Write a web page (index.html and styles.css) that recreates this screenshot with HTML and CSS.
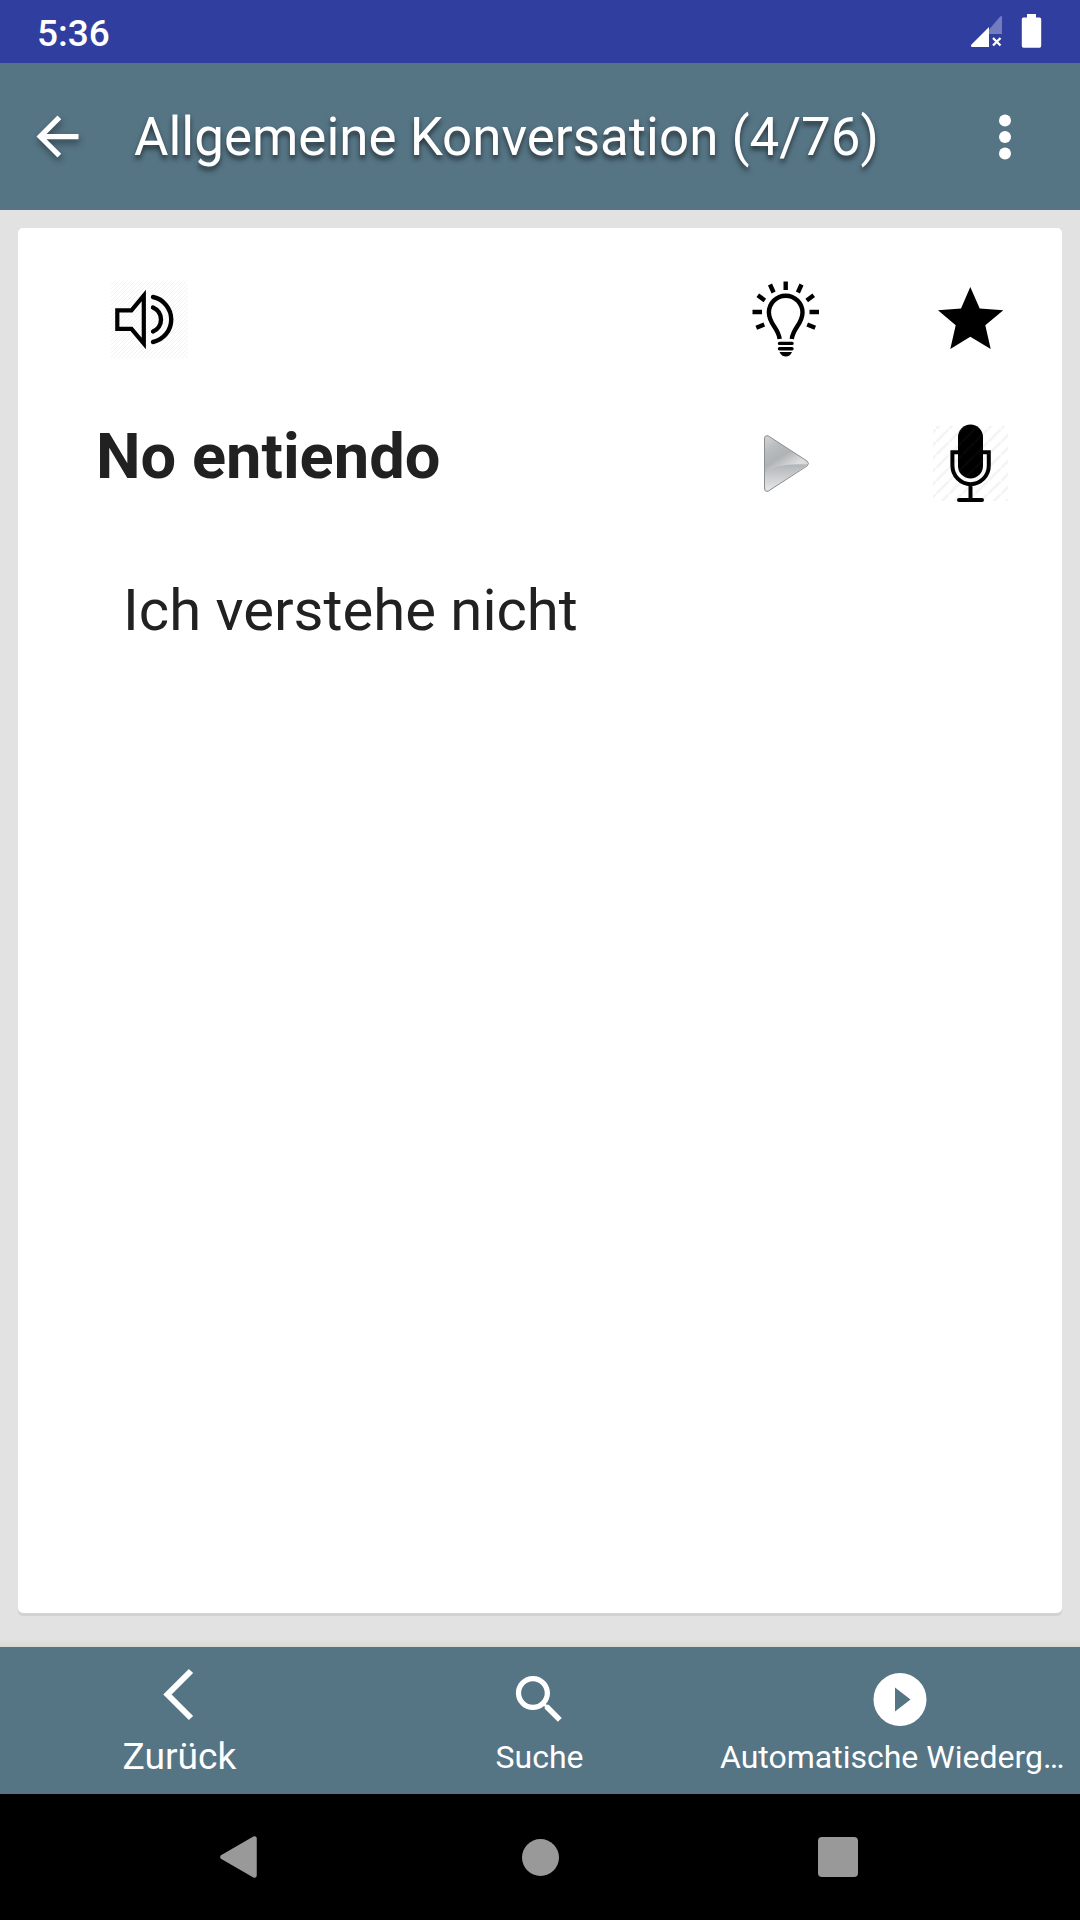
FILE: index.html
```html
<!DOCTYPE html>
<html lang="de">
<head>
    <meta charset="UTF-8">
    <meta name="viewport" content="width=device-width, initial-scale=1.0">
    <title>Allgemeine Konversation</title>
    <link rel="stylesheet" href="styles.css">
</head>
<body>
    <div class="status-bar">
        <span class="clock">5:36</span>
        <svg class="status-icons" width="72" height="36" viewBox="970 13 72 36">
            <path d="M989 29.5L1000 16.8Q1002 15 1002 17V34H989z" fill="#fff" opacity="0.32"/>
            <path d="M989 27V47H972Q970 46 971.5 44.5z" fill="#fff"/>
            <path d="M993 38l7.5 7.5M1000.5 38l-7.5 7.5" stroke="#fff" stroke-width="2.3"/>
            <path d="M1027 14h9v3.5h3.5q1.7 0 1.7 1.7V46q0 1.7-1.7 1.7h-16q-1.7 0-1.7-1.7V19.2q0-1.7 1.7-1.7h3.5z" fill="#fff"/>
        </svg>
    </div>
    <header class="toolbar">
        <svg class="back" width="63" height="63" viewBox="0 0 24 24">
            <path d="M20 11H7.83l5.59-5.59L12 4l-8 8 8 8 1.41-1.41L7.83 13H20v-2z" fill="#fff"/>
        </svg>
        <h1>Allgemeine Konversation (4/76)</h1>
        <svg class="more" width="16" height="50" viewBox="0 0 16 50">
            <circle cx="8" cy="8.5" r="6"/>
            <circle cx="8" cy="25" r="6"/>
            <circle cx="8" cy="41.5" r="6"/>
        </svg>
    </header>
    <main>
        <div class="card">
            <div class="phrase">
                <svg class="speaker" width="78" height="78" viewBox="110 281 78 78">
                    <defs>
                        <pattern id="hatch" width="4" height="4" patternUnits="userSpaceOnUse">
                            <path d="M-1 5L5 -1" stroke="#f3f3f3" stroke-width="1"/>
                        </pattern>
                    </defs>
                    <rect x="111" y="281" width="77" height="77" fill="url(#hatch)"/>
                    <g fill="none" stroke="#000" stroke-width="4.2">
                        <path d="M117.3 310.3H131.5L143.8 295.5V343.5L131.5 328.8H117.3z"/>
                        <path d="M153 307.5a13 13 0 0 1 0 24M153 297a23 23 0 0 1 0 45" stroke-width="4.4" stroke-linecap="round"/>
                    </g>
                </svg>
                <svg width="80" height="80" viewBox="746 281 80 80">
                    <g fill="none" stroke="#000" stroke-width="4.4">
                        <path d="M779.6 339C778.5 328 768.9 324 768.9 312.5a16.8 16.8 0 0 1 33.6 0C802.5 324 793 328 791.8 339"/>
                        <path d="M785.7 281.5v8.5M752.5 312h9.5M809.5 312h9.5M770 284.5l3.6 8M801.5 284.5l-3.6 8M757.8 295.2l7 5.2M813.7 295.2l-7 5.2M756.3 327.7l8-3.2M815.2 327.7l-8-3.2"/>
                        <path d="M779.5 343.4h12.5M779.5 348.8h12.5" stroke-width="3.4" stroke-linecap="round"/>
                    </g>
                    <path d="M779.5 352h12.5q-2 4.6-6.2 4.6t-6.3-4.6z"/>
                </svg>
                <svg width="80" height="80" viewBox="930 281 80 80">
                    <path d="M970.3 287L979.7 308.6L1003.3 310.3L985.3 325.3L990.7 349L970.3 336.7L950.3 349L955.7 325.3L938 310.3L961 308.6z"/>
                </svg>
                <h2>No entiendo</h2>
                <svg width="80" height="80" viewBox="746 424 80 80">
                    <defs>
                        <linearGradient id="silver" x1="0" y1="0" x2="0.5" y2="1">
                            <stop offset="0" stop-color="#d4d6d7"/>
                            <stop offset="0.25" stop-color="#b9bcbe"/>
                            <stop offset="0.45" stop-color="#b0b3b5"/>
                            <stop offset="0.7" stop-color="#dddfe0"/>
                            <stop offset="1" stop-color="#c4c6c8"/>
                        </linearGradient>
                        <linearGradient id="shine" x1="0" y1="0" x2="0" y2="1">
                            <stop offset="0" stop-color="#b2b5b7"/>
                            <stop offset="1" stop-color="#e6e7e8"/>
                        </linearGradient>
                    </defs>
                    <path d="M764.5 439q0-4.5 4-3l38.5 25q3 2.5 0 5l-38.5 25q-4 1.5-4-3z" fill="url(#silver)"/>
                    <path d="M765.5 472q13-9.5 42-7.5l-39 26q-3 1-3-2z" fill="url(#shine)"/>
                    <path d="M764.5 439q0-4.5 4-3l38.5 25q3 2.5 0 5l-38.5 25q-4 1.5-4-3z" fill="none" stroke="#8c8f91" stroke-width="1"/>
                </svg>
                <svg width="80" height="80" viewBox="930 424 80 80">
                    <defs>
                        <pattern id="stripes" width="13" height="13" patternUnits="userSpaceOnUse">
                            <path d="M-1 14L14 -1" stroke="#666" stroke-opacity="0.07" stroke-width="2.5"/>
                        </pattern>
                    </defs>
                    <rect x="958" y="424.5" width="25" height="54" rx="12.5"/>
                    <g fill="none" stroke="#000" stroke-width="4">
                        <path d="M958 452.3H952.4V465.5a18.2 18.7 0 0 0 36.4 0V452.3H983M970.5 484V499"/>
                        <path d="M959 500h23" stroke-linecap="round"/>
                    </g>
                    <rect x="933" y="426" width="75" height="75" fill="url(#stripes)"/>
                </svg>
            </div>
            <p class="translation">Ich verstehe nicht</p>
        </div>
    </main>
    <nav class="bottom-bar">
        <a class="item active">
            <svg width="63" height="63" viewBox="148.5 1663 63 63">
                <path d="M191.5 1671L168 1694.5L191.5 1718" fill="none" stroke="#fff" stroke-width="6"/>
            </svg>
            <span>Zurück</span>
        </a>
        <a class="item">
            <svg width="63" height="63" viewBox="0 0 24 24">
                <path d="M15.5 14h-.79l-.28-.27C15.41 12.59 16 11.11 16 9.5 16 5.91 13.09 3 9.5 3S3 5.91 3 9.5 5.91 16 9.5 16c1.61 0 3.09-.59 4.23-1.57l.27.28v.79l5 4.99L20.49 19l-4.99-5zm-6 0C7.01 14 5 11.99 5 9.5S7.01 5 9.5 5 14 7.01 14 9.5 11.99 14 9.5 14z" fill="#fff"/>
            </svg>
            <span>Suche</span>
        </a>
        <a class="item autoplay">
            <svg width="63" height="63" viewBox="867.5 1668 63 63">
                <circle cx="899.5" cy="1699.5" r="26.5" fill="#fff"/>
                <path d="M894.5 1687.5L910 1699.5L894.5 1711.5z" fill="#557484"/>
            </svg>
            <span>Automatische Wiederg…</span>
        </a>
    </nav>
    <div class="system-nav">
        <svg width="42" height="44" viewBox="0 0 42 44">
            <path d="M4.5 22L36.5 3.5V40.5z" fill="#999" stroke="#999" stroke-width="4.5" stroke-linejoin="round"/>
        </svg>
        <div class="home"></div>
        <div class="recent"></div>
    </div>
</body>
</html>
```
FILE: styles.css
```css
* { box-sizing: border-box; }
body { font-family: Roboto, sans-serif; background: #e2e2e2; margin: 0; height: 1920px; display: flex; flex-direction: column; overflow: hidden; }
h1, h2, p { margin: 0; }
svg { display: block; flex: none; }

.status-bar { height: 63px; background: #303f9f; display: flex; justify-content: space-between; align-items: flex-start; padding: 13px 38px 0 37px; }
.clock { margin-top: 1px; color: #fff; font-size: 37px; font-weight: 500; line-height: 40px; }

.toolbar { height: 147px; background: #557484; display: flex; align-items: center; padding: 0 67px 0 26px; }
.toolbar h1 { flex: 1; margin-left: 45px; color: #fff; font-size: 52.9px; font-weight: 400; line-height: 62px; text-shadow: 0 4px 5px rgba(0, 0, 0, 0.55); }
.back { filter: drop-shadow(1px 4px 3px rgba(0, 0, 0, 0.4)); }
.more { fill: #fff; filter: blur(0.6px); }

main { flex: 1; padding: 18px 18px 34px; background: linear-gradient(to bottom, #e2e2e2 calc(100% - 8px), #d8d8d6); }
.card { height: 1385px; padding: 53px 0 0 78px; background: #fff; border-radius: 5px; box-shadow: 0 3px 0 #d2d2d2; }
.phrase { display: grid; grid-template-columns: 650px 184px 80px; grid-template-rows: 80px 80px; row-gap: 63px; }
.speaker { margin-left: 14px; }
.phrase h2 { color: #212121; font-size: 63.2px; font-weight: 700; line-height: 64px; }
.translation { margin: 69px 0 0 27px; color: #212121; font-size: 58px; line-height: 74px; }

.bottom-bar { height: 147px; background: #557484; display: flex; }
.item { width: 360px; padding-top: 21px; display: flex; flex-direction: column; align-items: center; color: #fff; font-size: 32px; }
.item svg { margin-left: -2px; }
.item span { margin: 5px 1px 0 0; line-height: 42px; white-space: nowrap; }
.active { padding-top: 16px; font-size: 37.2px; }
.active span { margin-top: 9px; }
.autoplay span { align-self: flex-start; }

.system-nav { height: 126px; background: #000; display: flex; justify-content: space-between; align-items: center; padding: 0 222px 0 218px; }
.home { width: 37px; height: 37px; margin-left: 3px; border-radius: 50%; background: #999; }
.recent { width: 40px; height: 40px; border-radius: 4px; background: #999; }
```
